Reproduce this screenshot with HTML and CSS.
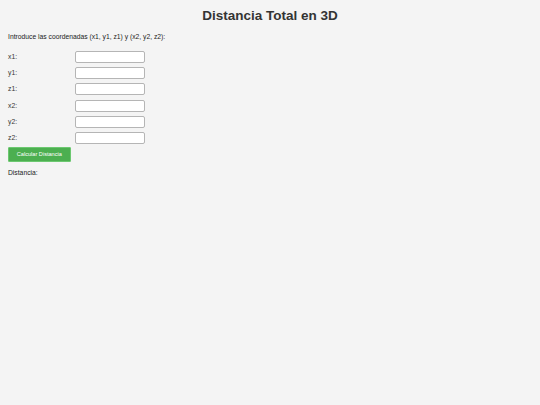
FILE: index.html
```html
<!DOCTYPE html>
<html lang="es">
<head>
<meta charset="utf-8">
<title>Distancia Total en 3D</title>
<link rel="stylesheet" href="styles.css">
</head>
<body>
<h1 class="title">Distancia Total en 3D</h1>
<p class="intro">Introduce las coordenadas (x1, y1, z1) y (x2, y2, z2):</p>
<div class="form">
  <div class="row"><label class="label">x1:</label><input class="field" type="text"></div>
  <div class="row"><label class="label">y1:</label><input class="field" type="text"></div>
  <div class="row"><label class="label">z1:</label><input class="field" type="text"></div>
  <div class="row"><label class="label">x2:</label><input class="field" type="text"></div>
  <div class="row"><label class="label">y2:</label><input class="field" type="text"></div>
  <div class="row"><label class="label">z2:</label><input class="field" type="text"></div>
</div>
<button class="btn" type="button">Calcular Distancia</button>
<p class="result">Distancia:</p>
</body>
</html>
```
FILE: styles.css
```css
html, body {
  margin: 0;
  padding: 0;
  background: #f4f4f4;
}
body {
  padding: 0 8px;
  font-family: "Liberation Sans", Arial, sans-serif;
  color: #333;
  font-size: 6.75px;
}
.title {
  margin: 0;
  height: 32px;
  line-height: 32px;
  font-size: 13.5px;
  font-weight: bold;
  text-align: center;
  color: #333;
}
.intro {
  margin: 0;
  line-height: 10px;
  color: #222;
}
.form {
  margin-top: 8.7px;
  display: flex;
  flex-direction: column;
  gap: 4.3px;
}
.row {
  display: flex;
  align-items: center;
  height: 12px;
}
.label {
  width: 67px;
  line-height: 10px;
}
.field {
  box-sizing: border-box;
  width: 70px;
  height: 12px;
  margin: 0;
  padding: 0 2px;
  border: 1px solid #b5b5b5;
  border-radius: 2px;
  background: #fff;
  font-size: 6.75px;
}
.btn {
  display: block;
  box-sizing: border-box;
  margin: 2.4px 0 0;
  width: 62.7px;
  height: 15px;
  padding: 0;
  border: 1px solid #6cc870;
  border-radius: 1px;
  background: #4caf50;
  color: #fff;
  font-family: "Liberation Sans", Arial, sans-serif;
  font-size: 5.6px;
}
.result {
  margin: 6.6px 0 0;
  line-height: 10px;
  color: #222;
}
```
